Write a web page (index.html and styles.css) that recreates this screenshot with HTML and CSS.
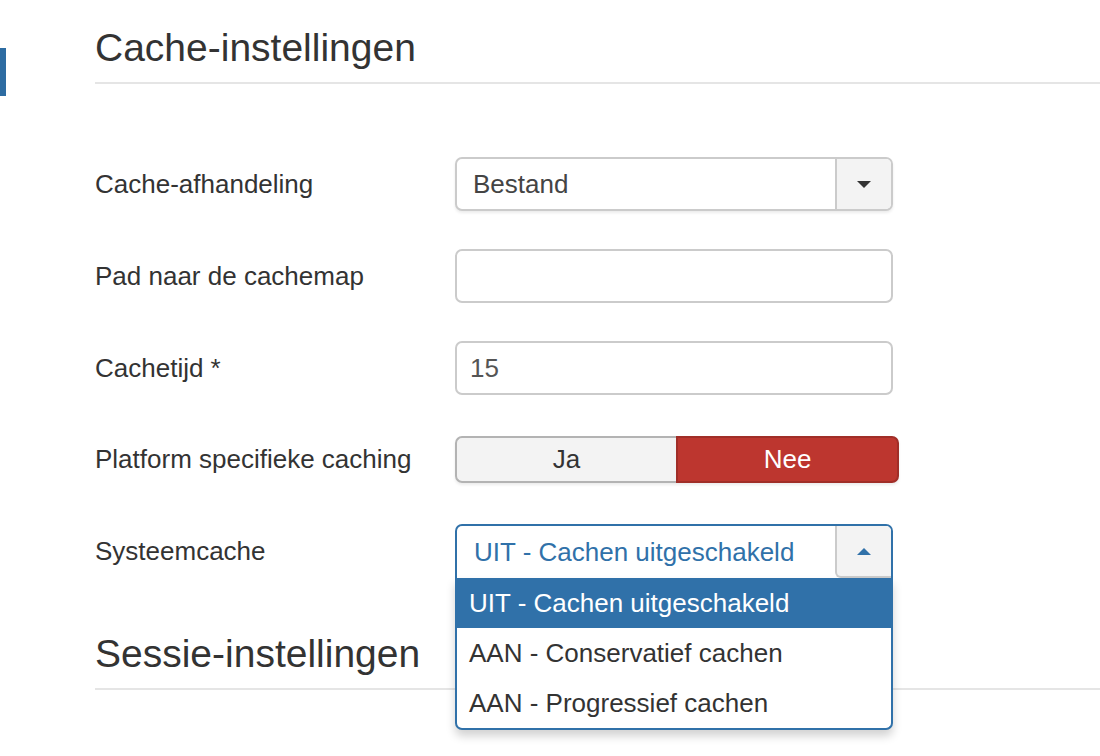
FILE: index.html
```html
<!DOCTYPE html>
<html lang="nl">
<head>
<meta charset="utf-8">
<title>Cache-instellingen</title>
<link rel="stylesheet" href="styles.css">
</head>
<body>
<div class="page">
  <aside class="sidebar"><div class="nav-active"></div></aside>
  <main class="content">
    <h2 class="legend">Cache-instellingen</h2>
    <div class="form">
      <div class="row">
        <label class="label">Cache-afhandeling</label>
        <div class="select">
          <span class="select-text">Bestand</span>
          <span class="select-btn"><span class="caret-down"></span></span>
        </div>
      </div>
      <div class="row">
        <label class="label">Pad naar de cachemap</label>
        <div class="input"></div>
      </div>
      <div class="row">
        <label class="label">Cachetijd *</label>
        <div class="input">15</div>
      </div>
      <div class="row row-toggle">
        <label class="label">Platform specifieke caching</label>
        <div class="toggle">
          <span class="toggle-opt toggle-ja">Ja</span>
          <span class="toggle-opt toggle-nee">Nee</span>
        </div>
      </div>
      <div class="row">
        <label class="label">Systeemcache</label>
        <div class="select-wrap">
          <div class="select select-open">
            <span class="select-text">UIT - Cachen uitgeschakeld</span>
            <span class="select-btn"><span class="caret-up"></span></span>
          </div>
          <ul class="dropdown">
            <li class="option option-active">UIT - Cachen uitgeschakeld</li>
            <li class="option">AAN - Conservatief cachen</li>
            <li class="option">AAN - Progressief cachen</li>
          </ul>
        </div>
      </div>
    </div>
    <h2 class="legend legend-second">Sessie-instellingen</h2>
  </main>
</div>
</body>
</html>
```
FILE: styles.css
```css
* { box-sizing: border-box; }
html, body {
  margin: 0;
  padding: 0;
  background: #fff;
  height: 756px;
  overflow: hidden;
}
body {
  font-family: "Liberation Sans", Arial, sans-serif;
  color: #333;
}
.page {
  display: flex;
  width: 1100px;
}
.sidebar {
  width: 95px;
  flex: none;
  padding-top: 48px;
}
.nav-active {
  width: 6px;
  height: 48px;
  background: #2d6ca2;
}
.content {
  flex: 1;
}
.legend {
  margin: 14px 0 0;
  font-size: 39px;
  font-weight: normal;
  line-height: 68px;
  color: #333;
  border-bottom: 2px solid #e5e5e5;
}
.legend-second {
  margin-top: 42px;
}
.form {
  margin-top: 73px;
  display: flex;
  flex-direction: column;
  gap: 38px;
}
.row {
  display: flex;
  align-items: center;
}
.row-toggle {
  padding: 3px 0;
}
.label {
  width: 360px;
  flex: none;
  font-size: 26px;
  color: #333;
}
.select {
  width: 438px;
  height: 54px;
  display: flex;
  border: 2px solid #cbcbcb;
  border-radius: 7px;
  background: #fff;
  box-shadow: 0 2px 3px rgba(0, 0, 0, 0.08);
}
.select-text {
  flex: 1;
  padding-left: 16px;
  font-size: 26px;
  line-height: 50px;
  color: #444;
}
.select-btn {
  width: 56px;
  flex: none;
  display: flex;
  align-items: center;
  justify-content: center;
  background: #f3f3f3;
  border-left: 2px solid #cbcbcb;
  border-radius: 0 5px 5px 0;
}
.caret-down {
  width: 0;
  height: 0;
  border-left: 7px solid transparent;
  border-right: 7px solid transparent;
  border-top: 7px solid #333;
}
.caret-up {
  width: 0;
  height: 0;
  border-left: 7px solid transparent;
  border-right: 7px solid transparent;
  border-bottom: 7px solid #3071a9;
}
.input {
  width: 438px;
  height: 54px;
  border: 2px solid #cbcbcb;
  border-radius: 7px;
  background: #fff;
  padding-left: 13px;
  font-size: 26px;
  line-height: 50px;
  color: #555;
}
.toggle {
  display: flex;
  width: 444px;
  height: 47px;
  box-shadow: 0 2px 3px rgba(0, 0, 0, 0.08);
  border-radius: 7px;
}
.toggle-opt {
  display: flex;
  align-items: center;
  justify-content: center;
  font-size: 26px;
}
.toggle-ja {
  width: 221px;
  background: #f3f3f3;
  border: 2px solid #b3b3b3;
  border-right: none;
  border-radius: 7px 0 0 7px;
  color: #333;
}
.toggle-nee {
  flex: 1;
  background: #bd362f;
  border: 2px solid #a02e28;
  border-radius: 0 7px 7px 0;
  color: #fff;
}
.select-wrap {
  position: relative;
  width: 438px;
}
.select-open {
  border-color: #3071a9;
  border-bottom: none;
  border-radius: 7px 7px 0 0;
  box-shadow: none;
}
.select-open .select-text {
  color: #3071a9;
  padding-left: 17px;
  line-height: 52px;
}
.select-open .select-btn {
  border-bottom: 2px solid #cbcbcb;
  border-radius: 0 5px 0 6px;
}
.dropdown {
  position: absolute;
  top: 100%;
  left: 0;
  width: 438px;
  margin: 0;
  padding: 0;
  list-style: none;
  background: #fff;
  border: 2px solid #3071a9;
  border-top: none;
  border-radius: 0 0 7px 7px;
  box-shadow: 0 6px 10px rgba(0, 0, 0, 0.18);
  z-index: 10;
}
.option {
  height: 50px;
  padding-left: 12px;
  font-size: 26px;
  line-height: 50px;
  color: #333;
}
.option-active {
  background: #3071a9;
  color: #fff;
}
```
